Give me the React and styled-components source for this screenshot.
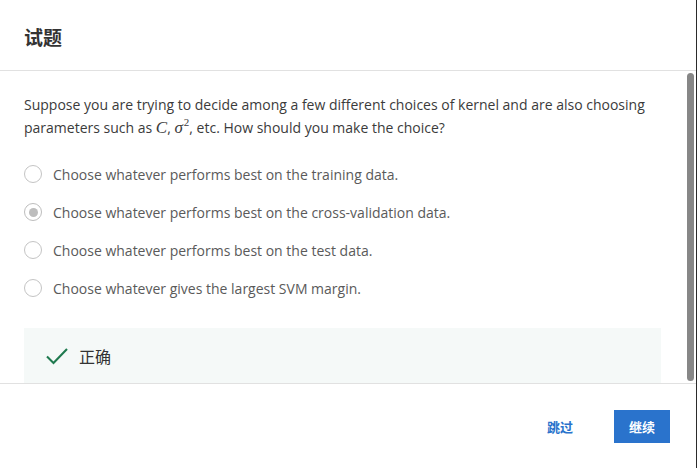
import React from 'react'
import styled, { createGlobalStyle } from 'styled-components'

const GlobalStyle = createGlobalStyle`
  html, body {
    margin: 0;
    padding: 0;
    background: #ffffff;
  }
  body {
    font-family: "Open Sans", "Noto Sans CJK SC", sans-serif;
  }
`

const Dialog = styled.div`
  width: 696px;
  height: 468px;
  border-right: 1px solid #2b2b2b;
  display: flex;
  flex-direction: column;
  background: #fff;
  overflow: hidden;
`

const Header = styled.header`
  height: 70px;
  flex-shrink: 0;
  display: flex;
  align-items: center;
  padding: 0 24px;
  border-bottom: 1px solid #e1e1e1;
`

const Title = styled.h2`
  margin: 0;
  font-family: "Noto Sans CJK SC", sans-serif;
  font-size: 19px;
  font-weight: 700;
  color: #333;
  padding-top: 2px;
`

const ScrollArea = styled.div`
  flex: 1;
  min-height: 0;
  position: relative;
`

const Body = styled.div`
  height: 100%;
  box-sizing: border-box;
  overflow: hidden;
  padding: 22px 35px 0 24px;
`

const ScrollThumb = styled.div`
  position: absolute;
  top: 2px;
  bottom: 2px;
  right: 2px;
  width: 7px;
  border-radius: 4px;
  background: #878787;
`

const Question = styled.p`
  margin: 0 0 16px;
  font-size: 14px;
  line-height: 23px;
  color: #3b3b3b;
`

const Math = styled.span`
  font-family: "Liberation Serif", serif;
  font-style: italic;
  font-size: 17px;
  line-height: 20px;
`

const Sup = styled.span`
  position: relative;
  top: -7px;
  font-size: 11px;
  font-style: normal;
  line-height: 0;
  margin-left: 1px;
`

const Options = styled.div`
  display: flex;
  flex-direction: column;
`

const Option = styled.label`
  height: 38px;
  display: flex;
  align-items: center;
  gap: 11px;
  font-size: 14px;
  color: #5a5a5a;
`

const Radio = styled.span`
  width: 18px;
  height: 18px;
  box-sizing: border-box;
  border-radius: 50%;
  border: 1.5px solid ${({ checked }) => (checked ? '#bdbdbd' : '#c4c4c4')};
  display: flex;
  align-items: center;
  justify-content: center;
  flex-shrink: 0;

  &::after {
    content: '';
    display: ${({ checked }) => (checked ? 'block' : 'none')};
    width: 9px;
    height: 9px;
    border-radius: 50%;
    background: #bdbdbd;
  }
`

const Feedback = styled.div`
  margin-top: 21px;
  background: #f5f9f8;
  padding: 16px 21px 18px;
  display: flex;
  align-items: center;
  gap: 10px;
`

const FeedbackText = styled.span`
  font-family: "Noto Sans CJK SC", sans-serif;
  font-size: 16px;
  line-height: 22px;
  color: #333;
`

const Footer = styled.footer`
  height: 84px;
  flex-shrink: 0;
  border-top: 1px solid #e1e1e1;
  display: flex;
  align-items: center;
  justify-content: flex-end;
  padding: 0 26px 0 0;
  gap: 25px;
`

const Button = styled.button`
  height: 33px;
  padding: 0 ${({ primary }) => (primary ? '15px' : '16px')};
  border: none;
  border-radius: 0;
  font-family: "Noto Sans CJK SC", sans-serif;
  font-size: 13px;
  font-weight: 700;
  cursor: pointer;
  background: ${({ primary }) => (primary ? '#2a73cc' : 'transparent')};
  color: ${({ primary }) => (primary ? '#fff' : '#2a73cc')};
`

const CheckIcon = () => (
  <svg width="24" height="24" viewBox="0 0 24 24" fill="none">
    <path d="M2 12.5 L8.5 19 L22 5" stroke="#1f7a4f" strokeWidth="2.1" />
  </svg>
)

const choices = [
  { label: 'Choose whatever performs best on the training data.', checked: false },
  { label: 'Choose whatever performs best on the cross-validation data.', checked: true },
  { label: 'Choose whatever performs best on the test data.', checked: false },
  { label: 'Choose whatever gives the largest SVM margin.', checked: false }
]

const App = () => {
  return (
    <>
      <GlobalStyle />
      <Dialog>
        <Header>
          <Title>试题</Title>
        </Header>
        <ScrollArea>
          <Body>
            <Question>
              Suppose you are trying to decide among a few different choices of kernel and are also choosing
              parameters such as <Math>C</Math>, <Math>σ<Sup>2</Sup></Math>, etc. How should you make the choice?
            </Question>
            <Options>
              {choices.map(choice =>
                <Option key={choice.label}>
                  <Radio checked={choice.checked} />
                  {choice.label}
                </Option>
              )}
            </Options>
            <Feedback>
              <CheckIcon />
              <FeedbackText>正确</FeedbackText>
            </Feedback>
          </Body>
          <ScrollThumb />
        </ScrollArea>
        <Footer>
          <Button>跳过</Button>
          <Button primary>继续</Button>
        </Footer>
      </Dialog>
    </>
  )
}

export default App
